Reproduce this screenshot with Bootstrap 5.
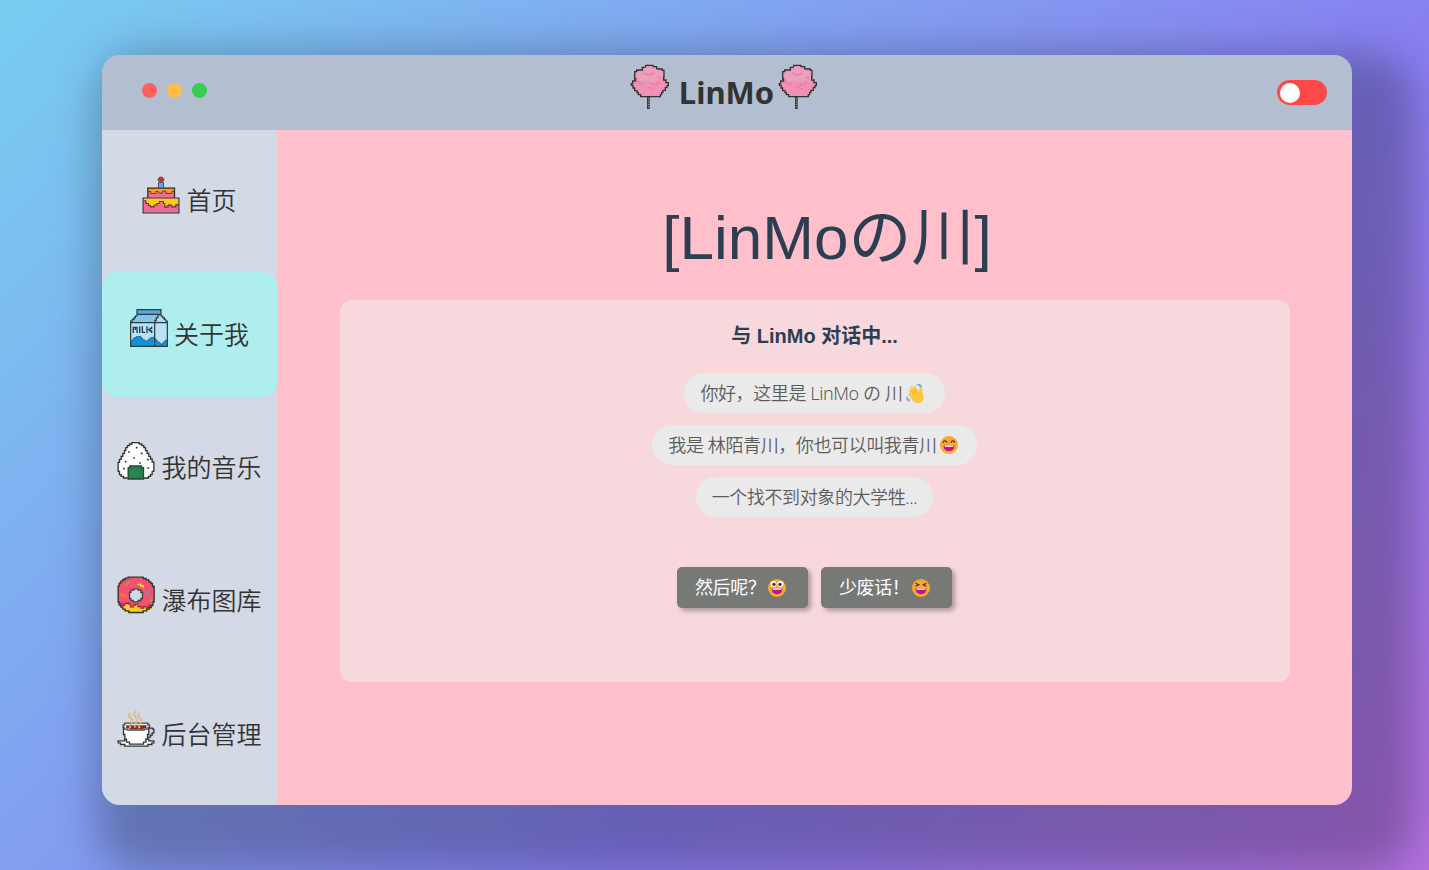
<!DOCTYPE html>
<html lang="zh-CN">
<head>
<meta charset="utf-8">
<meta name="viewport" content="width=device-width, initial-scale=1">
<title>LinMo</title>
<link rel="stylesheet" href="https://cdn.jsdelivr.net/npm/bootstrap@5.3.0/dist/css/bootstrap.min.css">
<style>
body{height:100vh;overflow:hidden;font-family:"Noto Sans","Noto Sans CJK SC",sans-serif;color:#333;background:linear-gradient(135deg,#78cef0 0%,#897ff1 64%,#b471e0 100%)}
svg{display:block;flex:none}
.app-window{width:1250px;height:750px;margin:55px 0 0 102px;border-radius:18px;box-shadow:28px 32px 40px 35px rgba(0,0,0,.25);overflow:hidden}
.title-bar{height:75px;background:#b3bfd1;display:grid;grid-template-columns:1fr auto 1fr}
.dots{padding:28px 0 0 40px;gap:10px}
.dot{width:15px;height:15px;border-radius:50%}
.dot-close{background:#ff605c}.dot-min{background:#ffbd44}.dot-max{background:#36ce4f}
.brand-group{margin-left:-6px}
.brand-group svg{margin-top:7px}
.brand-text{font:bold 31px/40px "Noto Sans",sans-serif;margin:17px 3px 0 8px}
.switch{width:50px;height:25px;border-radius:13px;background:#ff4949;padding:3px;margin:25px 25px 0 auto}
.switch i{display:block;width:20px;height:20px;border-radius:50%;background:#fff}
.side{width:175px;background:#d3dae5;justify-content:space-evenly}
.side a{height:125px;border-radius:15px;color:#333;text-decoration:none;font-family:"Noto Sans CJK SC",sans-serif;font-size:25px;font-weight:350;line-height:40px;gap:5px;padding-right:1px}
.side a svg{margin-bottom:12px}
.side a span{margin-bottom:3px}
.side a.on{background:#afeeee}
.main-pane{background:#ffbfcb}
.hero{font-family:"Liberation Sans","Noto Sans CJK SC",sans-serif;font-size:62px;font-weight:400;line-height:80px;height:80px;color:#2c3e50;padding-left:25px;margin:68px 0 22px;white-space:nowrap}
.hero span{font-size:63px;font-weight:400;line-height:1}
.talk{width:950px;height:382px;border-radius:12px;background:#f7d9dd}
.talk h2{font-family:"Liberation Sans","Noto Sans CJK SC",sans-serif;font-size:20px;font-weight:700;line-height:30px;color:#2c3e50;margin:21px 0 22px}
.bubble{height:40px;border-radius:20px;background:#eaeaea;color:#5c5c5c;font-size:18px;letter-spacing:-.4px;font-weight:350;margin-bottom:12px;line-height:40px;white-space:nowrap}
.bubble svg{margin:0 3px}
.replies{gap:13px;margin-top:38px}
.reply{width:131px;height:41px;border:0;border-radius:5px;background:#777977;color:#fff;font-size:18px;letter-spacing:-.4px;box-shadow:3px 3px 5px rgba(0,0,0,.3);padding:0 0 0 18px}
.reply svg{margin-left:3px}
</style>
</head>
<body>
<svg width="0" height="0" class="position-absolute">
<symbol id="candy" viewBox="30 20 126 150">
<path d="M80 30h22v4h11v7h17v4h5v20h-1v9h7v8h7v9h-4v6h-5v8h-7v6h-4v7h-4v6H65v-6h-7v-6h-4v-6h-7v-8h-5v-8h-5v-5h4v-8h9v-6h-3V49h6v-5h17v-8h10z" fill="#f191b5" stroke="#333" stroke-width="4"/>
<path d="M80 34h20v8h14v5h16v20h-8v8h-12v8H94v-6H82v8H66v-7h-8v-9h-6V52h8v-5h14v-7h6z" fill="#e8a0bd"/>
<path d="M74 54h8v4h18v-4h5M54 73v7h8v5h12v-5h7M86 96h10v5h14M94 83h8v5h12v-6h8M116 66h10" fill="none" stroke="#ee7ba7" stroke-width="3.5"/>
<path d="M88 125v36" stroke="#333" stroke-width="8"/><path d="M88 129v30" stroke="#aaa" stroke-width="3" stroke-dasharray="4 4"/>
</symbol>
<symbol id="laugh" viewBox="0 0 18 18"><circle cx="9" cy="9" r="9" fill="#fba72b"/><path d="M3.6 9.6h10.8c0 3.7-2.1 5.6-5.4 5.6s-5.4-1.9-5.4-5.6z" fill="#ba1981"/><path d="M4.6 9.6h8.8v.6c0 .4-.3.6-.7.6H5.3c-.4 0-.7-.2-.7-.6z" fill="#fff"/></symbol>
</svg>
<main class="app-window d-flex flex-column">
<header class="title-bar">
<div class="dots d-flex"><span class="dot dot-close"></span><span class="dot dot-min"></span><span class="dot dot-max"></span></div>
<div class="brand-group d-flex"><svg width="42" height="50"><use href="#candy"/></svg><span class="brand-text">LinMo</span><svg width="42" height="50"><use href="#candy"/></svg></div>
<div class="switch"><i></i></div>
</header>
<div class="d-flex flex-grow-1">
<nav class="side d-flex flex-column">
<a href="#" class="d-flex align-items-center justify-content-center">
<svg width="40" height="40" viewBox="118.5 43.5 120 120"><path d="M138 82h82v30h-82z" fill="#ee6c98"/><path d="M140 84h78v9h-5v6h-13v-5h-9v-3h-7v7h-12v-5h-8v6h-15v-5h-9z" fill="#ff9d0a"/><path d="M140 93h8v6h15v-6h8v5h12v-6h10v7h18v-6h8" fill="none" stroke="#6b4430" stroke-width="3"/><path d="M139 83h80v30h-80zM125 113h107v44H125z" fill="none" stroke="#333" stroke-width="4"/><path d="M127 115h103v40H127z" fill="#ee6c98"/><path d="M127 115h103v14h-8v6h-15v-5h-7v4h-14v-10h-10v7h-9v6h-20v-5h-10v-8h-10z" fill="#fc1"/><path d="M127 121h6v8h8v6h6v4h11v-5h8v-5h8v-6h12v6h4v11h10v-6h10v5h13v-6h9" fill="none" stroke="#5f4130" stroke-width="3.5"/><path d="M171 66h15v16h-15z" fill="#4cb5ef" stroke="#555" stroke-width="3"/><path d="M174 50h9v4h4v7h-4v3h-9v-3h-4v-7h4z" fill="#f51528" stroke="#555" stroke-width="3"/></svg><span>首页</span></a>
<a href="#" class="on d-flex align-items-center justify-content-center">
<svg width="40" height="40" viewBox="81 144 120 120"><path d="M105 165h68v4h-5v8h-4v8h-5v3H86v-4h4v-5h5v-5h5v-5h5z" fill="#7dc6ee"/><path d="M173 165h4v5h5v4h4v5h5v4h5v5h-37v-5h4v-8h5v-8h5z" fill="#a9dbf5"/><path d="M86 188h110v71H86z" fill="#b8e2f8"/><path d="M86 243h6v-5h4v-5h7v-3h14v4h5v6h8v5h6v-5h6v-5h6v-3h9v4h5v6h5v5h7v5h9v-5h6v-6h7v18H86z" fill="#0b95dc"/><path d="M86 243h6v-5h4v-5h7v-3h14v4h5v6h8v5h6v-5h6v-5h6v-3h9v4h5v6h5v5h7v5h9v-5h6v-6h7" fill="none" stroke="#2d698b" stroke-width="3"/><path d="M105 149h72v14h-72z" fill="#58a7d8"/><path d="M105 149h72v14h-72zM105 163v5h-5v5h-4v5h-5v5h-5v76h110v-76h-5v-5h-4v-5h-5v-5h-5v-5h-5M86 188h110M158 188v71M159 187v-6h4v-8h5v-8h5" fill="none" stroke="#303b40" stroke-width="3.7"/><path d="M94 219v-17h11v17M100 201v9M113 199v20M121 199v18h8M135 199v20M149 200v5h-5v4h-6M144 209v4h5v6" fill="none" stroke="#263945" stroke-width="4"/></svg><span>关于我</span></a>
<a href="#" class="d-flex align-items-center justify-content-center">
<svg width="40" height="40" viewBox="43.5 33 120 120"><path d="M91 38h22v4h8v5h6v6h5v9h5v8h5v9h5v8h5v9h5v28h-5v10h-5v5h-6v5H66v-5h-7v-5h-5v-10h-4v-27h4v-9h5v-9h5v-9h5v-9h4v-8h5v-6h6v-5h7z" fill="#fcfdfd" stroke="#333" stroke-width="4"/><path d="M80 113h5v-5h35v5h6v34H80z" fill="#268650" stroke="#26453a" stroke-width="4"/><path d="M86 115h32v28H86" fill="none" stroke="#1e6f43" stroke-width="3" stroke-dasharray="4 4"/><path d="M103 53h5M80 66h5M118 70h5M95 84h5M70 95h5M113 99h5M137 89h5M65 116h5M138 114h5" stroke="#333" stroke-width="5"/></svg><span>我的音乐</span></a>
<a href="#" class="d-flex align-items-center justify-content-center">
<svg width="40" height="40" viewBox="43.5 28.5 120 120"><path id="ring" d="M80 35h45v4h9v4h8v6h6v5h5v9h5v47h-4v10h-5v6h-6v5h-7v5h-11v5H82v-5H71v-5h-7v-6h-6v-6h-5v-9h-3V62h3v-9h5v-6h6v-5h7v-4h9z" fill="#f5526d"/><path d="M59 122h4v-3h8v-5h9v-1h4v5h5v8h8v-5h7v-3h8v7h9v5h7v-5h8v4h8v-5h5v6h-5v5h-7v4h-11v4H82v-4H71v-5h-7v-6h-5z" fill="#ffcd20"/><path d="M54 114h8v6h7v-6h9v-3h4v5h5v8h8v-5h6v-3h8v7h9v5h7v-5h8v4h8v-7h7" fill="none" stroke="#a52f48" stroke-width="4"/><path d="M80 35h45v4h9v4h8v6h6v5h5v9h5v47h-4v10h-5v6h-6v5h-7v5h-11v5H82v-5H71v-5h-7v-6h-6v-6h-5v-9h-3V62h3v-9h5v-6h6v-5h7v-4h9z" fill="none" stroke="#333" stroke-width="4"/><path d="M97 70h13v4h8v7h5v18h-5v6h-8v4H95v-4h-7v-6h-4V81h4v-7h9z" fill="#d3dae5" stroke="#444" stroke-width="4"/><path d="M70 58h6v-5h7v-5M144 106h6v-8" fill="none" stroke="#82a85c" stroke-width="5"/><path d="M108 57h10v4h7v6" fill="none" stroke="#ffd52b" stroke-width="5"/><path d="M143 70v8h-5v11" fill="none" stroke="#36a6d5" stroke-width="5"/><path d="M57 86h7v6h10" fill="none" stroke="#fc7932" stroke-width="5"/></svg><span>瀑布图库</span></a>
<a href="#" class="d-flex align-items-center justify-content-center">
<svg width="40" height="40" viewBox="43.5 23.5 120 120"><path d="M52 122h18v-5h72v5h15v6h-6v5h-12v5H70v-5H57v-5h-7v-6z" fill="#fff" stroke="#333" stroke-width="4"/><path d="M66 80h76v23h-4v14h-5v9h-7v6H84v-6h-9v-9h-5v-14h-4z" fill="#fff" stroke="#333" stroke-width="4"/><path d="M143 84h10v3h4v11h-5v7h-5v6h-8" fill="none" stroke="#333" stroke-width="4"/><path d="M65 74h5v-5h69v5h5v8h-4v5h-12v3H78v-3H68v-5h-3z" fill="#f7f3ef" stroke="#444" stroke-width="4"/><path d="M74 75h61v9h-9v4H83v-4h-9z" fill="#7b2e1d"/><path d="M89 82h-4v-9h5v-8h3v-8h-6v-6h-5v-9h5v-5M104 80h-5v-9h5v-8h4v-9h-6v-8h-4v-9h5v-9M117 82h-5v-8h5v-8h4v-8h-6v-8h-4v-9h6" fill="none" stroke="#d9bd86" stroke-width="4"/></svg><span>后台管理</span></a>
</nav>
<section class="main-pane flex-grow-1 d-flex flex-column align-items-center">
<h1 class="hero">[LinMo<span>の川</span>]</h1>
<div class="talk d-flex flex-column align-items-center">
<h2>与 LinMo 对话中...</h2>
<div class="bubble px-3 d-flex align-items-center">你好，这里是 LinMo の 川<svg class="me-1" width="19" height="19" viewBox="0 0 18 18"><path d="M3.2 5.2c.8-.7 1.5-.2 2 .4l2.1 2.5-3-4.2c-.6-1.2.9-2.2 1.8-1.2l3.2 4-2-3.3c-.5-1.3 1-2 1.8-1l3.2 5 .4-3.5c.3-1.5 2.5-1.3 2.4.4l.6 4.2c2.6 5.5.2 9.5-4.4 9.5-3.1 0-4.6-2.2-6.1-4.3L2.6 10c-.6-1.2.6-2 1.6-1.2L6 10.4 3 6.8c-.4-.6-.3-1.2.2-1.6z" fill="#fdc83c"/><path d="m5 6.3 3 3.6M7.5 5.3l2.8 3.5" stroke="#e39a2b" stroke-width=".7"/><path d="M10 1.2c1.7-.9 3.3.1 3.7 2M11.3.5c2-.4 3.4.9 3.5 2.6M1 11.5c-.2 2 1.2 3.4 3 3.5M.4 13.2c.3 1.7 1.6 2.8 3.2 2.9" fill="none" stroke="#78a9ea" stroke-width="1"/></svg></div>
<div class="bubble px-3 d-flex align-items-center">我是 林陌青川，你也可以叫我青川<svg width="18" height="18" viewBox="0 0 18 18"><use href="#laugh"/><path d="M3.3 6.4c.4-2 2.9-2 3.5 0M11.2 6.4c.5-2 3-2 3.5 0" fill="none" stroke="#443143" stroke-width="1.1" stroke-linecap="round"/></svg></div>
<div class="bubble px-3">一个找不到对象的大学牲...</div>
<div class="replies d-flex">
<button type="button" class="reply d-flex align-items-center">然后呢？<svg width="18" height="18" viewBox="0 0 18 18"><use href="#laugh"/><circle cx="5.5" cy="5" r="3" fill="#fff"/><circle cx="12.5" cy="5" r="3" fill="#fff"/><circle cx="6" cy="5.3" r="1.6" fill="#402a32"/><circle cx="12" cy="5.3" r="1.6" fill="#402a32"/></svg></button>
<button type="button" class="reply d-flex align-items-center">少废话！<svg width="18" height="18" viewBox="0 0 18 18"><use href="#laugh"/><path d="m3.6 4.2 3.2 1.5-3.2 1.6M14.4 4.2l-3.2 1.5 3.2 1.6" fill="none" stroke="#402a32" stroke-width="1.1"/></svg></button>
</div>
</div>
</section>
</div>
</main>
<script src="https://cdn.jsdelivr.net/npm/bootstrap@5.3.0/dist/js/bootstrap.bundle.min.js"></script>
</body>
</html>
